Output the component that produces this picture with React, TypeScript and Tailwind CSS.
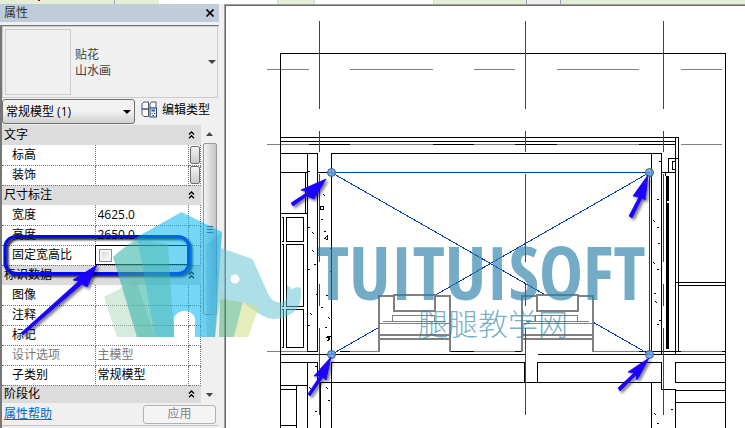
import React, { useState } from 'react';

type Line = [number, number, number, number];

interface PropertyRow {
    label: string;
    value?: string;
    header?: boolean;
    picker?: boolean;
    checkbox?: boolean;
    disabled?: boolean;
}

const rows: PropertyRow[] = [
    { label: '文字', header: true },
    { label: '标高', picker: true },
    { label: '装饰', picker: true },
    { label: '尺寸标注', header: true },
    { label: '宽度', value: '4625.0' },
    { label: '高度', value: '2650.0' },
    { label: '固定宽高比', checkbox: true },
    { label: '标识数据', header: true },
    { label: '图像' },
    { label: '注释' },
    { label: '标记' },
    { label: '设计选项', value: '主模型', disabled: true },
    { label: '子类别', value: '常规模型' },
    { label: '阶段化', header: true },
];

// x1, y1, x2, y2
const wallLines: Line[] = [
    [280, 53, 725, 53], [280, 53, 280, 428], [725, 53, 725, 428],
    [280, 137, 678, 137], [280, 141, 675, 141],
    [309, 144, 349, 144], [433, 144, 473, 144], [515, 144, 556, 144], [639, 144, 675, 144],
    [280, 153, 317, 153], [331, 153, 661, 153],
    [307, 153, 307, 351], [317, 153, 317, 351], [331, 153, 331, 354],
    [280, 172, 307, 172], [317, 172, 331, 172], [305, 172, 305, 213], [280, 213, 307, 213],
    [307, 171, 309, 171],
    [651, 153, 651, 351], [661, 153, 661, 354], [675, 137, 675, 354], [678, 137, 678, 351],
    [668, 158, 678, 158], [668, 158, 668, 172], [661, 172, 675, 172], [665, 172, 665, 175],
    [675, 282, 725, 282], [678, 285, 725, 285],
    [280, 354, 524, 354], [538, 354, 725, 354],
    [307, 351, 317, 351], [340, 351, 349, 351], [450, 351, 473, 351], [515, 351, 523, 351],
    [639, 351, 680, 351], [722, 351, 725, 351],
    [280, 362, 317, 362], [331, 362, 524, 362], [538, 362, 661, 362], [675, 362, 725, 362],
    [317, 362, 317, 382], [320, 382, 320, 428], [307, 362, 307, 428], [331, 362, 331, 428],
    [524, 362, 524, 382], [537, 362, 537, 382], [320, 382, 661, 382],
    [280, 385, 307, 385], [296, 385, 296, 428], [280, 389, 296, 389], [280, 425, 296, 425],
    [661, 362, 661, 389], [651, 382, 651, 428], [661, 389, 675, 389], [675, 390, 725, 390],
    [675, 362, 675, 382], [675, 389, 675, 428], [675, 382, 725, 382], [675, 402, 725, 402],
];

const greyLines: Line[] = [
    [267, 69, 308, 69], [350, 69, 432, 69], [474, 69, 514, 69], [557, 69, 638, 69], [681, 69, 721, 69],
    [267, 144, 308, 144], [350, 144, 432, 144], [474, 144, 514, 144], [557, 144, 638, 144], [681, 144, 721, 144],
    [267, 351, 307, 351], [350, 351, 450, 351], [474, 351, 514, 351], [523, 351, 638, 351], [681, 351, 721, 351],
];

const gridSegments = [[21, 108], [131, 151], [174, 261], [284, 305], [328, 414]];

const specks: [number, number][] = [
    [323, 194], [321, 219], [308, 227], [312, 232], [324, 231], [330, 248], [312, 250], [314, 264], [308, 269],
    [330, 271], [316, 294], [326, 295], [310, 313], [308, 325], [321, 307], [328, 317], [325, 327], [315, 366],
    [326, 387], [328, 400], [315, 411], [309, 387], [659, 161], [657, 199], [653, 220], [657, 227], [658, 243],
    [653, 262], [657, 269], [654, 293], [655, 301], [657, 324], [659, 320], [654, 413], [657, 423], [671, 409],
];

const handles = [[331, 172], [649, 172], [331, 354], [649, 354]];

const arrows = [
    '326,179 301,190 308,192 291,203 293,206 307,196 314,199',
    '648,175 633,196 639,197 629,216 632,218 642,198 645,200',
    '331,357 314,376 320,376 308,394 310,396 323,377 326,380',
    '649,358 628,372 634,373 618,388 620,391 636,375 637,380',
    '97,265 73,280 79,281 21,333 23,335 82,284 87,287',
];

const Lines: React.FC<{ lines: Line[]; color: string }> = ({ lines, color }) => (
    <path
        d={lines.map(([x1, y1, x2, y2]) => `M${x1} ${y1}L${x2} ${y2}`).join('')}
        stroke={color}
        strokeLinecap="square"
        fill="none"
    />
);

const Bed: React.FC<{ x: number }> = ({ x }) => (
    <g transform={`translate(${x} 0)`} fill="none" stroke="#808080">
        <path d="M0.5 351V295.5H71V351" fill="white" strokeWidth="2" />
        <path d="M15 294H56V310H15z" fill="white" strokeWidth="2" />
        <path d="M1 334H71M1 338H71" strokeWidth="2" />
        <path d="M1 323H70M4 321H67M14 321V315H56V321" />
    </g>
);

const ElevationView: React.FC = () => (
    <svg width="519" height="422" viewBox="226 6 519 422" className="block shrink-0" aria-label="立面视图">
        <g transform="translate(0.5 0.5)" shapeRendering="crispEdges">
            <Lines lines={greyLines} color="#808080" />
            <Lines lines={wallLines} color="#000" />
            <path d="M281 217H283V241H281M281 244H283V306H281M281 309H283V347H281" fill="none" stroke="#000" />
            <path d="M286 217H303V241H286zM286 244H303V306H286zM286 309H303V347H286zM672 161H675V169H672z" fill="none" stroke="#000" />
            <path d="M320 206H323V209H320zM324 238L327 235V239zM326 337L330 336L327 341M327 336L330 340" fill="none" stroke="#000" />
            <rect x="665" y="175" width="3" height="173" fill="#000" />
            <rect x="666" y="200" width="2" height="2" fill="#fff" />
            {specks.map(([x, y], i) => (
                <path key={i} d={i % 3 ? `M${x} ${y}h1` : `M${x} ${y}l1 1`} stroke="#000" strokeLinecap="square" />
            ))}
            <path d="M331 172H649V354M331 172L649 354M649 172L331 354" fill="none" stroke="#003cb4" />
            <Bed x={378} />
            <Bed x={521} />
            {[319, 525, 663].map(x => (
                <Lines key={x} lines={gridSegments.map(([a, b]) => [x, a, x, b] as Line)} color="#e80000" />
            ))}
        </g>
        {handles.map(([x, y]) => (
            <circle key={`${x}-${y}`} cx={x + 0.5} cy={y + 0.5} r="4" fill="#5fa3ee" fillOpacity="0.85" stroke="#48617e" />
        ))}
    </svg>
);

const Watermark: React.FC = () => (
    <svg width="745" height="428" viewBox="0 0 745 428" className="pointer-events-none absolute left-0 top-0">
        <defs>
            <filter id="shadow" x="-20%" y="-20%" width="150%" height="160%">
                <feDropShadow dx="2" dy="2" stdDeviation="1.5" floodColor="#000" floodOpacity="0.55" />
            </filter>
            <filter id="frameShadow" x="-5%" y="-20%" width="110%" height="150%">
                <feDropShadow dx="2" dy="2" stdDeviation="0.8" floodColor="#000" floodOpacity="0.9" />
            </filter>
        </defs>
        <rect x="5" y="236.5" width="184" height="37" rx="11" fill="none" stroke="#0010e0" strokeWidth="3.2" filter="url(#frameShadow)" />
        {arrows.map(points => (
            <polygon key={points} points={points} fill="#1a00ff" stroke="#1a00ff" strokeWidth="0.8" strokeLinejoin="round" filter="url(#shadow)" />
        ))}

        <path d="M104 297L136 280L155 337H117z" fill="#9fd3b3" fillOpacity="0.45" />
        <path d="M181.5 212L222 232L220 258L215 337H195V319Q193 311 184.5 311Q176 311 174 319V337H155L137 237z" fill="#00b4ee" fillOpacity="0.54" />
        <path d="M113 257Q125 246 137 237L155 337H137z" fill="#00b4c8" fillOpacity="0.3" />
        <path d="M113 257Q125 246 139 240L168 244L174 337H137z" fill="#4fb59a" fillOpacity="0.42" />
        <path d="M206 245L222 232L215 337H207z" fill="#1590c8" fillOpacity="0.18" />
        <path
            d="M221 248L252.5 259L266 289Q271 302 278 302.500Q287 302 286.500 297L287 286Q290 286 292 289.500Q296 286 301 288Q302 302 297 309Q288 319 273 319Q262 318 243 302L220 299L215 337H208z"
            fill="#5fc1d2"
            fillOpacity="0.52"
        />
        <path d="M220 299L243 302L234 337H219z" fill="#3fa96e" fillOpacity="0.5" />
        <path d="M243 302L259 307L248 337H234z" fill="#d5e090" fillOpacity="0.6" />
        <circle cx="235" cy="279" r="4.5" fill="#fff" />

        <g fill="#297fa9" fillOpacity="0.65">
            <text x="317" y="300" className="font-['Open_Sans_Condensed','Liberation_Sans_Narrow',sans-serif] text-[74px] font-bold">TUITUISOFT</text>
            <text x="418" y="335" className="font-['Noto_Sans_CJK_SC',sans-serif] text-[30px] font-light">腿腿教学网</text>
        </g>
    </svg>
);

const Chevrons: React.FC = () => (
    <svg width="7" height="8" viewBox="0 0 7 8" fill="none" stroke="currentColor" strokeWidth="1.3">
        <path d="M1 3.5L3.5 1L6 3.5M1 7.2L3.5 4.7L6 7.2" />
    </svg>
);

const EditTypeIcon: React.FC = () => (
    <svg width="17" height="17" viewBox="0 0 17 17" fill="#fff" stroke="#44566c">
        <path d="M1 3L3 1H7.5V8H1zM1 8H7.5V15.5H3L1 13.5zM9 3L10.5 1H15V7H9z" />
        <rect x="9" y="7" width="6.5" height="9" fill="#e5effc" stroke="#2b4777" />
        <path d="M10.5 9.5H14" stroke="#245fc5" strokeWidth="2" />
        <path d="M10.5 12.5H11.5M13 12.5H14M11.5 14.5H13" stroke="#2b4777" />
    </svg>
);

const PropertyTable: React.FC = () => {
    const [locked, setLocked] = useState(false);

    return (
        <table className="w-full table-fixed border-collapse bg-white">
            <colgroup>
                <col className="w-[93px]" />
                <col />
                <col className="w-3" />
            </colgroup>
            <tbody>
                {rows.map((row, i) => row.header ? (
                    <tr key={row.label} className={`bg-[#dcdcdc] ${i === rows.length - 1 ? 'h-[18px]' : 'h-5'}`}>
                        <th colSpan={3} className="p-0 text-left font-normal">
                            <button type="button" className="flex w-full items-center justify-between pl-0.5 pr-1.5 leading-4">
                                {row.label}
                                <Chevrons />
                            </button>
                        </th>
                    </tr>
                ) : (
                    <tr key={row.label} className={`h-5 ${row.disabled ? 'text-[#777]' : ''}`}>
                        <th className="border-b border-r border-dotted border-[#777] p-0 pl-2.5 text-left font-normal leading-4">
                            <label htmlFor={`prop-${i}`}>{row.label}</label>
                        </th>
                        <td className={`border-b border-r border-dotted border-[#777] p-0 ${row.checkbox ? 'outline outline-black -outline-offset-1' : ''}`}>
                            {row.checkbox ? (
                                <input
                                    id={`prop-${i}`}
                                    type="checkbox"
                                    checked={locked}
                                    onChange={e => setLocked(e.target.checked)}
                                    className="ml-[3px] block h-[13px] w-[13px] appearance-none border border-[#8e8f8f] bg-linear-to-br from-[#cfd1d3] to-white shadow-[inset_0_0_0_2px_#f4f4f4] checked:bg-blue-500"
                                />
                            ) : (
                                <input
                                    id={`prop-${i}`}
                                    type="text"
                                    defaultValue={row.value}
                                    disabled={row.disabled}
                                    className="block h-4 w-full bg-transparent pl-0.5 leading-4"
                                />
                            )}
                        </td>
                        <td className="border-b border-r border-dotted border-[#777] p-0">
                            {row.picker && (
                                <button
                                    type="button"
                                    aria-label={`选择${row.label}`}
                                    className="ml-px block h-[18px] w-2.5 rounded-xs border border-[#707070] bg-linear-to-b from-[#f4f4f4] to-[#c9c9c9]"
                                />
                            )}
                        </td>
                    </tr>
                ))}
            </tbody>
        </table>
    );
};

const PropertiesPanel: React.FC = () => (
    <aside className="flex w-[224px] shrink-0 flex-col bg-[#f0f0f0] pr-[5px]">
        <header className="flex h-[18px] items-center justify-between bg-[#bfcddb] pl-1 pr-[5px] text-[#333]">
            <h1>属性</h1>
            <button type="button" aria-label="关闭" className="text-black">
                <svg width="8" height="8" viewBox="0 0 8 8" stroke="currentColor" strokeWidth="1.6">
                    <path d="M0.5 0.5L7.5 7.5M7.5 0.5L0.5 7.5" />
                </svg>
            </button>
        </header>

        <div className="mt-[3px] flex grow flex-col border-l-2 border-t border-[#777] pr-px">
            <button type="button" className="flex h-[72px] items-center border border-[#ccc] pl-0.5 pr-px text-left leading-4 text-[#444]">
                <span className="h-[66px] w-[66px] border border-[#ccc]" />
                <span className="ml-1 grow pt-0.5">贴花<br />山水画</span>
                <svg width="8" height="4" viewBox="0 0 8 4" fill="#444"><path d="M0 0H8L4 4z" /></svg>
            </button>

            <div className="flex h-[27px] items-center">
                <div className="relative">
                    <select aria-label="类别" className="h-[25px] w-[133px] appearance-none rounded-[3px] border border-[#707070] bg-linear-to-b from-[#f2f2f2] from-50% to-[#cfcfcf] pl-[3px]">
                        <option>常规模型 (1)</option>
                    </select>
                    <svg className="pointer-events-none absolute right-1 top-[11px]" width="8" height="4" viewBox="0 0 8 4"><path d="M0 0H8L4 4z" /></svg>
                </div>
                <button type="button" className="ml-1.5 flex items-center gap-1 pb-1">
                    <EditTypeIcon />
                    编辑类型
                </button>
            </div>

            <div className="flex">
                <div className="min-w-0 grow">
                    <PropertyTable />
                </div>
                <div className="flex w-[17px] shrink-0 flex-col items-center bg-[#f0f0f0]" aria-hidden="true">
                    <div className="flex h-[18px] items-center">
                        <svg width="7" height="4" viewBox="0 0 7 4" fill="#444"><path d="M3.5 0L7 4H0z" /></svg>
                    </div>
                    <div className="flex h-[172px] w-3.5 flex-col items-center justify-center gap-0.5 rounded-xs border border-[#999] bg-linear-to-r from-[#f3f3f3] to-[#c4c4c8]">
                        <span className="h-px w-1.5 bg-[#555]" />
                        <span className="h-px w-1.5 bg-[#555]" />
                        <span className="h-px w-1.5 bg-[#555]" />
                    </div>
                    <div className="flex grow items-end pb-1.5">
                        <svg width="7" height="4" viewBox="0 0 7 4" fill="#444"><path d="M0 0H7L3.5 4z" /></svg>
                    </div>
                </div>
            </div>

            <footer className="flex h-[23px] items-center justify-between border-b border-[#c4c4c4] pl-0.5 pr-0.5">
                <a href="#help" className="text-[#0066cc] underline">属性帮助</a>
                <button type="button" disabled className="h-[19px] w-[73px] rounded-[3px] border border-[#adb2b5] bg-[#f4f4f4] leading-4 text-[#838383]">应用</button>
            </footer>
        </div>
    </aside>
);

const App: React.FC = () => (
    <div className="relative flex min-h-screen flex-col overflow-hidden bg-white font-['Open_Sans','Noto_Sans_CJK_SC',sans-serif] text-xs leading-4 text-black">
        <div className="flex h-1 shrink-0">
            <div className="w-[115px] border-r border-[#a5a5ad] bg-[#e3eed5]">
                <div className="ml-[38px] h-px w-0.5 bg-red-800" />
            </div>
            <div className="w-11 bg-[#e3eed5]" />
            <div className="w-[118px]" />
            <div className="w-[38px] border-x border-[#d5d5dd] bg-[#e3eed5]" />
            <div className="w-[118px]" />
            <div className="w-[93px] border-l border-[#d5d5dd] bg-[#e3eed5]" />
            <div className="w-[35px] border-x border-[#9c9ca8] bg-[#eee]" />
            <div className="grow bg-[#e3eed5]" />
        </div>
        <div className="flex grow">
            <PropertiesPanel />
            <main className="flex min-w-0 grow overflow-hidden border-l border-t border-[#a0a0a0]">
                <div className="grow border-l border-t border-[#696969]">
                    <ElevationView />
                </div>
            </main>
        </div>
        <Watermark />
    </div>
);

export default App;
